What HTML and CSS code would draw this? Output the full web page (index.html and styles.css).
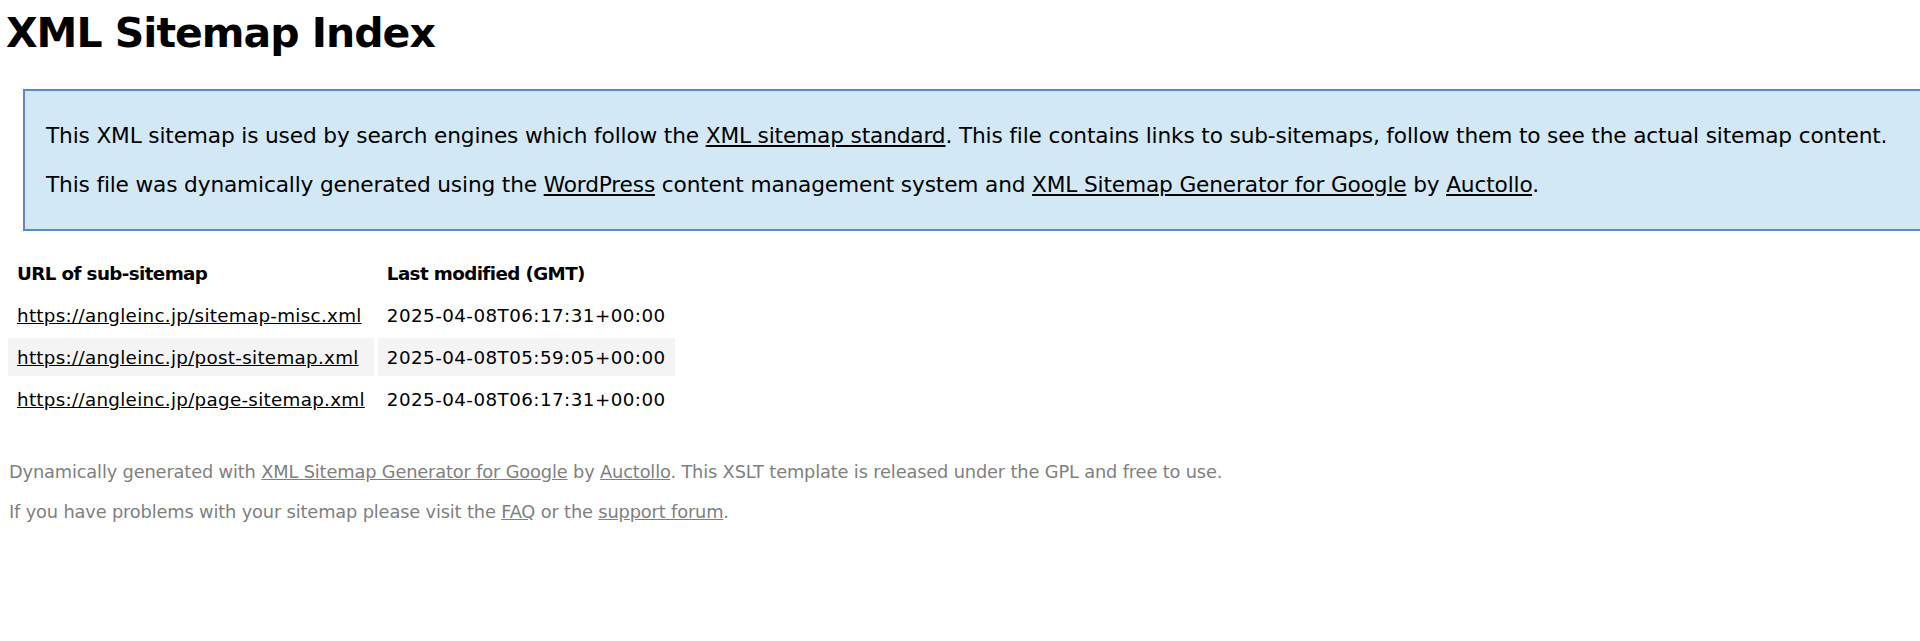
FILE: index.html
```html
<!DOCTYPE html>
<html>
<head>
<meta charset="utf-8">
<title>XML Sitemap Index</title>
<link rel="stylesheet" href="styles.css">
</head>
<body>
<h1 class="title">XML Sitemap Index</h1>
<div class="intro">
<p>This XML sitemap is used by search engines which follow the <a href="#">XML sitemap standard</a>. This file contains links to sub-sitemaps, follow them to see the actual sitemap content.</p>
<p>This file was dynamically generated using the <a href="#">WordPress</a> content management system and <a href="#">XML Sitemap Generator for Google</a> by <a href="#">Auctollo</a>.</p>
</div>
<table class="sitemaps">
<tr><th>URL of sub-sitemap</th><th>Last modified (GMT)</th></tr>
<tr><td><a href="#">https://angleinc.jp/sitemap-misc.xml</a></td><td class="date">2025-04-08T06:17:31+00:00</td></tr>
<tr class="high"><td><a href="#">https://angleinc.jp/post-sitemap.xml</a></td><td class="date">2025-04-08T05:59:05+00:00</td></tr>
<tr><td><a href="#">https://angleinc.jp/page-sitemap.xml</a></td><td class="date">2025-04-08T06:17:31+00:00</td></tr>
</table>
<div class="footer">
<p>Dynamically generated with <a href="#">XML Sitemap Generator for Google</a> by <a href="#">Auctollo</a>. This XSLT template is released under the GPL and free to use.</p>
<p>If you have problems with your sitemap please visit the <a href="#">FAQ</a> or the <a href="#">support forum</a>.</p>
</div>
</body>
</html>
```

FILE: styles.css
```css
html {
  overflow: hidden;
  background: #ffffff;
}
body {
  margin: 0;
  padding: 0 4px;
  font-family: "DejaVu Sans", "Liberation Sans", sans-serif;
  color: #000000;
  background: #ffffff;
}
a {
  color: #000000;
  text-decoration: underline;
}
.title {
  font-size: 41px;
  line-height: 50px;
  font-weight: bold;
  letter-spacing: -1px;
  margin: 8px 0 0 2px;
}
.intro {
  width: 1900px;
  margin: 31px 0 0 19px;
  padding: 10px 21px;
  background: #d3e8f5;
  border: 2px solid #5a8cc0;
  font-size: 21.7px;
  letter-spacing: -0.16px;
}
.intro p {
  margin: 20px 0;
  line-height: 29px;
  white-space: nowrap;
}
.sitemaps {
  margin-top: 18.6px;
  border-spacing: 4px;
  font-size: 18.3px;
  letter-spacing: 0.3px;
}
.sitemaps th,
.sitemaps td {
  text-align: left;
  line-height: 24px;
  padding: 8px 9px 6.3px 9px;
  white-space: nowrap;
}
.sitemaps th {
  font-weight: bold;
  letter-spacing: -0.6px;
}
.sitemaps td.date {
  letter-spacing: 0.45px;
}
.sitemaps tr.high td {
  background: #f4f4f4;
}
.footer {
  margin-top: 17.2px;
  padding: 3px 5px;
  font-size: 17.8px;
  color: #808080;
  letter-spacing: -0.15px;
}
.footer p {
  margin: 17.8px 0;
  line-height: 22.2px;
}
.footer a {
  color: #808080;
}
```
